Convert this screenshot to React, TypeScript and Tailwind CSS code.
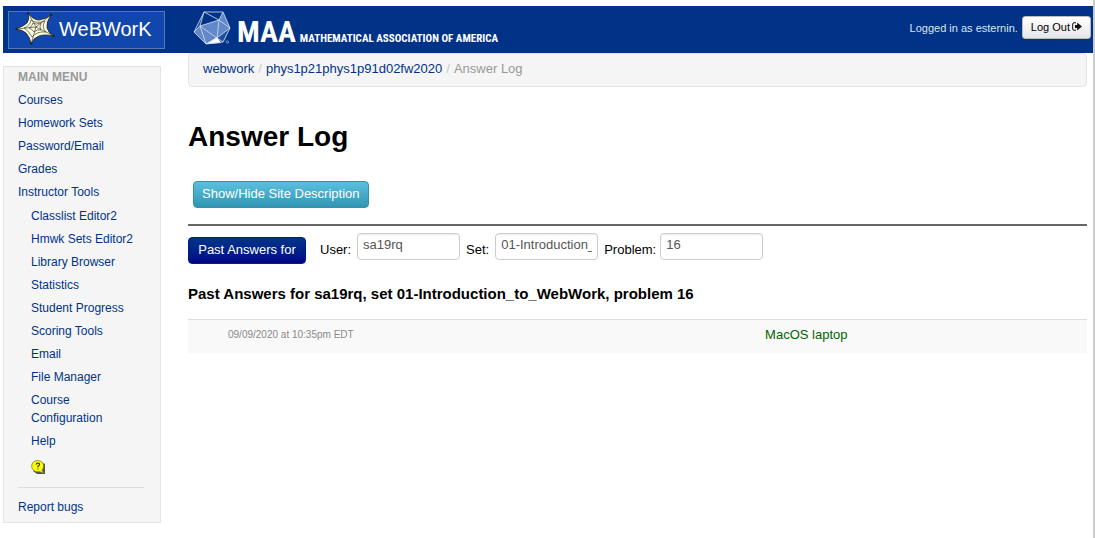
import { useState } from "react";

const mainLinks = ["Courses", "Homework Sets", "Password/Email", "Grades", "Instructor Tools"];
const toolLinks = [
  "Classlist Editor2",
  "Hmwk Sets Editor2",
  "Library Browser",
  "Statistics",
  "Student Progress",
  "Scoring Tools",
  "Email",
  "File Manager",
  "Course Configuration",
  "Help",
];

function WebIcon() {
  return (
    <svg viewBox="0 0 40 34" className="h-[34px] w-10 shrink-0" aria-hidden="true">
      <path
        d="M13 1 Q18 8 24 8 Q31 7 36 3 Q31 10 32 16 Q34 22 39 24 Q29 22 24 24 Q18 26 16 32 Q15 25 11 21 Q8 18 1 17 Q9 14 12 11 Q15 7 13 1Z"
        fill="#fbf9dc"
        stroke="#25251f"
        strokeWidth="0.8"
      />
      <g fill="none" stroke="#45453c" strokeWidth="0.7">
        <path d="M13 1 21 15 36 3M21 15 39 24M21 15 16 32M21 15 1 17" />
        <path d="M16 8 Q21 12 30 9 Q26 15 31 20 Q22 19 17 25 Q15 20 9 16 Q15 14 16 8Z" />
        <path d="M18 11 Q21 13 26 11 Q24 15 26 18 Q22 17 19 20 Q17 17 14 16 Q17 15 18 11Z" />
      </g>
      <g fill="#25251f">
        <circle cx="13" cy="1.500" r="1.200" />
        <circle cx="36" cy="3" r="1.200" />
        <circle cx="38.500" cy="24" r="1.200" />
        <circle cx="16" cy="31.500" r="1.200" />
        <circle cx="1.500" cy="17" r="1.200" />
      </g>
    </svg>
  );
}

function Icosahedron() {
  return (
    <svg viewBox="0 0 38 34" className="h-[34px] w-[38px] shrink-0" aria-hidden="true">
      <defs>
        <pattern id="hatch" width="2" height="2" patternUnits="userSpaceOnUse">
          <rect width="2" height="2" fill="#4a74bd" />
          <path d="M0 1H2" stroke="#8fabdc" strokeWidth="0.700" />
        </pattern>
      </defs>
      <path d="M11 1 30 1 37 17 32 30 13 33 1 21Z" fill="#1f4e9f" />
      <path d="M11 1 30 1 26 9 7 15Z" fill="#003388" />
      <path d="M26 9 7 15 24 27Z" fill="url(#hatch)" />
      <path d="M26 9 30 1 37 17 24 27Z" fill="url(#hatch)" />
      <path d="M7 15 1 21 13 33 24 27Z" fill="url(#hatch)" />
      <path d="M13 33 24 26 28 32Z" fill="#fff" />
      <path
        d="M11 1 30 1 37 17 30 31 13 33 1 21ZM11 1 26 9 30 1M26 9 7 15 11 1M7 15 24 27 26 9 37 17 24 27 13 33 7 15 1 21M24 27 30 31"
        fill="none"
        stroke="#d6e0f3"
        strokeWidth="0.800"
        strokeLinejoin="round"
      />
      <circle cx="34.500" cy="31" r="1.200" fill="none" stroke="#b8c9e8" strokeWidth="0.600" />
    </svg>
  );
}

function HelpIcon() {
  return (
    <svg viewBox="0 0 14 14" className="h-3.5 w-3.5" aria-hidden="true">
      <path d="M2 11 12 3 14 4V14H6Z" fill="#555" />
      <path
        d="M6.500 .6C10 .6 12.600 2.700 12.600 5.900C12.600 8 11.600 9.500 11 10.300L13 13.200L8.500 11.700C4 12.600 .7 9.700 .7 6.100C.7 2.900 3 .6 6.500 .6Z"
        fill="#ffff00"
        stroke="#6b6b20"
        strokeWidth=".7"
      />
      <path d="M5 4.600Q5.200 3 6.900 3Q8.700 3.100 8.500 4.700Q8.300 5.700 6.900 6.300V7.200M6.900 8.400V9.600" fill="none" stroke="#333" strokeWidth="1.200" />
    </svg>
  );
}

function LogOutIcon() {
  return (
    <svg viewBox="0 0 10 9" className="h-[9px] w-2.5" aria-hidden="true">
      <path d="M4 .8H2Q.7 .8 .7 2V7Q.7 8.200 2 8.200H4" fill="none" stroke="#111" strokeWidth="1" />
      <path d="M3 3H5.200V.5L9.900 4.500 5.200 8.500V6H3Z" fill="#111" />
    </svg>
  );
}

const link = "text-[#003388] hover:underline";
const field =
  "h-[27px] w-[103px] rounded-[4px] border border-[#ccc] bg-white px-[5px] pb-1 text-[13px] text-[#555] shadow-[inset_0_1px_1px_rgba(0,0,0,0.075)] outline-none";

export default function App() {
  const [user, setUser] = useState("sa19rq");
  const [set, setSet] = useState("01-Introduction_to_WebWork");
  const [problem, setProblem] = useState("16");

  return (
    <div className="min-h-screen border-r-2 border-[#cbcbcb] bg-white pl-[3px] pt-1.5 font-['Liberation_Sans',Arial,sans-serif] text-[13px] leading-[18px] text-black">
      <header className="flex h-[47px] items-center bg-[#003388] pl-[5px] pr-0.5">
        <a
          href="#"
          className="flex h-[38px] w-[157px] shrink-0 items-center gap-1 border border-[#5577b5] bg-[#1147ac] pb-0.5 pl-1.5 text-[20px] text-white"
        >
          <WebIcon />
          WeBWorK
        </a>
        <a href="#" className="ml-7 flex items-center whitespace-nowrap pb-1 font-['Liberation_Sans_Narrow','Roboto_Condensed','Open_Sans_Condensed',sans-serif] font-bold text-white">
          <Icosahedron />
          <span className="flex items-baseline gap-1 pl-1.5 pt-2">
            <span className="text-[30px] leading-9">MAA</span>
            <span className="text-[11px]">MATHEMATICAL ASSOCIATION OF AMERICA</span>
          </span>
        </a>
        <div className="ml-auto flex items-center gap-1 whitespace-nowrap pb-1 text-[11px] text-[#dce4f2]">
          Logged in as esternin.
          <button className="flex h-[23px] items-center gap-0.5 rounded-[3px] border border-[#bbb] bg-linear-to-b from-white to-[#e6e6e6] px-2 pb-0.5 text-black">
            Log Out
            <LogOutIcon />
          </button>
        </div>
      </header>

      <div className="flex items-start gap-[27px] pr-1.5">
        <nav className="mt-[13px] w-[158px] shrink-0 border border-[#e3e3e3] bg-[#f5f5f5] pb-1.5 pl-3.5 pr-4 text-[12px]" aria-label="Main menu">
          <h2 className="pt-px font-bold text-[#999]">MAIN MENU</h2>
          <ul className="flex flex-col gap-[5px] pt-[5px]">
            {mainLinks.map((name) => (
              <li key={name}>
                <a href="#" className={link}>{name}</a>
              </li>
            ))}
          </ul>
          <ul className="flex flex-col gap-[5px] pl-[13px] pr-2.5 pt-1.5">
            {toolLinks.map((name) => (
              <li key={name}>
                <a href="#" className={link}>{name}</a>
              </li>
            ))}
            <li className="flex h-5 items-center pt-1">
              <a href="#" aria-label="Help">
                <HelpIcon />
              </a>
            </li>
          </ul>
          <hr className="my-2.5 mt-3 border-[#ddd]" />
          <a href="#" className={link}>Report bugs</a>
        </nav>

        <main className="min-w-0 grow">
          <nav aria-label="Breadcrumb" className="flex h-[34px] items-center gap-1 rounded-[4px] border border-[#e3e3e3] bg-[#f5f5f5] px-3.5 pb-0.5">
            <a href="#" className={link}>webwork</a>
            <span className="text-[#ccc]">/</span>
            <a href="#" className={link}>phys1p21phys1p91d02fw2020</a>
            <span className="text-[#ccc]">/</span>
            <span className="text-[#999]">Answer Log</span>
          </nav>
          <h1 className="mt-8 text-[28px] font-bold leading-9">Answer Log</h1>
          <button className="ml-[5px] mt-[26px] h-[27px] rounded-[4px] border border-[#3a8fa8] bg-linear-to-b from-[#5bc0de] to-[#2f96b4] px-2 pb-0.5 text-white">
            Show/Hide Site Description
          </button>
          <hr className="mt-4 border-t-2 border-[#666]" />
          <form className="flex items-start pt-[7px]" onSubmit={(e) => e.preventDefault()}>
            <button className="mt-1 h-[27px] w-[118px] whitespace-nowrap rounded-[4px] border border-[#001f77] bg-linear-to-b from-[#003388] to-[#000088] pb-0.5 text-white">
              Past Answers for
            </button>
            <label className="ml-3.5 flex items-center gap-1.5">
              <span className="pt-1.5">User:</span>
              <input className={field} value={user} onChange={(e) => setUser(e.target.value)} />
            </label>
            <label className="ml-1.5 flex items-center gap-1.5">
              <span className="pt-1.5">Set:</span>
              <input className={field} value={set} onChange={(e) => setSet(e.target.value)} />
            </label>
            <label className="ml-1.5 flex items-center gap-1">
              <span className="pt-1.5">Problem:</span>
              <input className={field} value={problem} onChange={(e) => setProblem(e.target.value)} />
            </label>
          </form>
          <h3 className="mt-[21px] text-[15px] font-bold">Past Answers for sa19rq, set 01-Introduction_to_WebWork, problem 16</h3>
          <table className="mt-4 w-full table-fixed border-t border-[#ddd] bg-[#f9f9f9]">
            <tbody>
              <tr className="h-[33px]">
                <td className="w-[42%] pb-0.5 pl-10 text-[10px] text-[#888]">09/09/2020 at 10:35pm EDT</td>
                <td className="pb-0.5 pr-10 text-center text-[#006400]">MacOS laptop</td>
              </tr>
            </tbody>
          </table>
        </main>
      </div>
    </div>
  );
}
